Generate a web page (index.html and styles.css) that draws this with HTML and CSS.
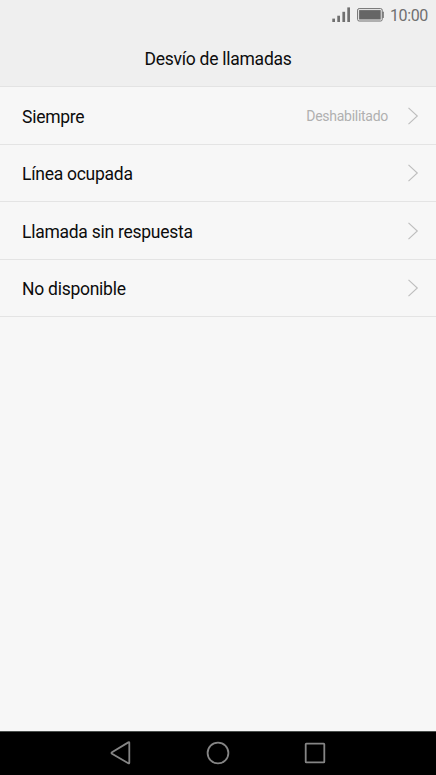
FILE: index.html
```html
<!DOCTYPE html>
<html lang="es">
    <head>
        <meta charset="UTF-8">
        <meta name="viewport" content="width=device-width, initial-scale=1.0">
        <title>Desvío de llamadas</title>
        <link rel="stylesheet" href="styles.css">
    </head>
    <body>
        <header>
            <div class="status-bar">
                <svg class="signal" width="19" height="16" viewBox="0 0 19 16" fill="#707070">
                    <rect x="0.3" y="11.6" width="2.7" height="3.4"/>
                    <rect x="5.3" y="8.7" width="2.7" height="6.3"/>
                    <rect x="10.4" y="4.8" width="2.7" height="10.2"/>
                    <rect x="15.3" y="0.4" width="2.7" height="14.6"/>
                </svg>
                <svg class="battery" width="28" height="14" viewBox="0 0 28 14">
                    <rect x="0.6" y="0.6" width="24.6" height="12.4" rx="1.5" fill="none" stroke="#707070"/>
                    <rect x="2.1" y="2.1" width="21.6" height="9.4" fill="#666"/>
                    <rect x="25.4" y="3.6" width="1.4" height="6.4" rx="0.6" fill="#707070"/>
                </svg>
                <span class="clock">10:00</span>
            </div>
            <h1>Desvío de llamadas</h1>
        </header>

        <main class="menu">
            <a class="item">
                <span class="label">Siempre</span>
                <span class="value">Deshabilitado</span>
                <svg class="arrow" width="12" height="18" viewBox="0 0 12 18"><path d="M1.5 0.8L10.3 9L1.5 17.2"/></svg>
            </a>
            <a class="item short">
                <span class="label">Línea ocupada</span>
                <svg class="arrow" width="12" height="18" viewBox="0 0 12 18"><path d="M1.5 0.8L10.3 9L1.5 17.2"/></svg>
            </a>
            <a class="item">
                <span class="label">Llamada sin respuesta</span>
                <svg class="arrow" width="12" height="18" viewBox="0 0 12 18"><path d="M1.5 0.8L10.3 9L1.5 17.2"/></svg>
            </a>
            <a class="item short">
                <span class="label">No disponible</span>
                <svg class="arrow" width="12" height="18" viewBox="0 0 12 18"><path d="M1.5 0.8L10.3 9L1.5 17.2"/></svg>
            </a>
        </main>

        <footer>
            <svg width="24" height="24" viewBox="0 0 24 24"><path d="M20.3 1.6V21.8Q20.3 22.8 19.3 22.2L3 12.8Q1.9 12 3 11.2L19.3 1.4Q20.3 0.9 20.3 1.6Z"/></svg>
            <svg width="24" height="24" viewBox="0 0 24 24"><circle cx="12" cy="12" r="10.4"/></svg>
            <svg width="24" height="24" viewBox="0 0 24 24"><rect x="2.7" y="2.7" width="18.6" height="18.6" rx="0.6"/></svg>
        </footer>
    </body>
</html>
```
FILE: styles.css
```css
body {
    font-family: Roboto, sans-serif;
    margin: 0;
    height: 775px;
    display: flex;
    flex-direction: column;
    background-color: #f7f7f7;
    color: #0c0c0c;
    overflow: hidden;
}

header {
    height: 86px;
    background-color: #efefef;
    border-bottom: 1px solid #e3e3e3;
}

.status-bar {
    display: flex;
    align-items: center;
    justify-content: flex-end;
    height: 30px;
    padding-right: 8px;
}

.signal {
    margin-right: 6px;
}

.battery {
    margin-right: 5px;
}

.clock {
    font-size: 16px;
    letter-spacing: -0.35px;
    line-height: 28px;
    padding-top: 2px;
    color: #707070;
}

h1 {
    margin: 0;
    font-size: 17.5px;
    letter-spacing: -0.26px;
    font-weight: 400;
    line-height: 58px;
    text-align: center;
}

.menu {
    flex: 1;
}

.item {
    box-sizing: border-box;
    display: flex;
    align-items: center;
    height: 58px;
    padding: 0 17px 0 22px;
    border-bottom: 1px solid #e4e4e4;
}

.item.short {
    height: 57px;
}

.label {
    flex: 1;
    font-size: 17.5px;
    letter-spacing: -0.26px;
    line-height: 20px;
    padding-top: 2px;
}

.value {
    font-size: 14px;
    letter-spacing: -0.28px;
    color: #b0b0b0;
    margin-right: 19px;
}

.arrow {
    fill: none;
    stroke: #bdbdbd;
    stroke-width: 1.1;
}

footer {
    box-sizing: border-box;
    height: 44px;
    display: flex;
    justify-content: center;
    align-items: center;
    gap: 73px;
    background-color: black;
    border-top: 1px solid #4a4f4c;
}

footer svg {
    fill: none;
    stroke: #858585;
    stroke-width: 1.8;
    margin-bottom: 1px;
}
```
